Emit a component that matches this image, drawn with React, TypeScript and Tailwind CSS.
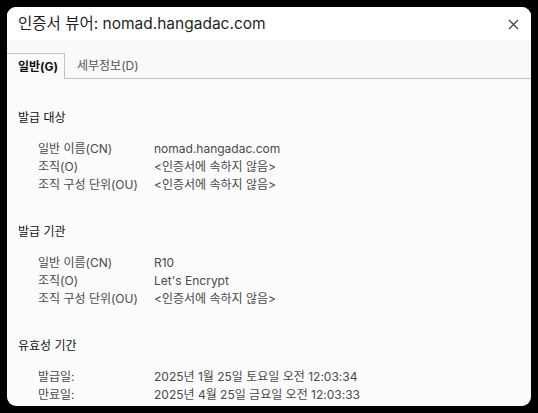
import React from "react";

const sections = [
  {
    title: "발급 대상",
    rows: [
      ["일반 이름(CN)", "nomad.hangadac.com"],
      ["조직(O)", "<인증서에 속하지 않음>"],
      ["조직 구성 단위(OU)", "<인증서에 속하지 않음>"],
    ],
  },
  {
    title: "발급 기관",
    rows: [
      ["일반 이름(CN)", "R10"],
      ["조직(O)", "Let's Encrypt"],
      ["조직 구성 단위(OU)", "<인증서에 속하지 않음>"],
    ],
  },
  {
    title: "유효성 기간",
    rows: [
      ["발급일:", "2025년 1월 25일 토요일 오전 12:03:34"],
      ["만료일:", "2025년 4월 25일 금요일 오전 12:03:33"],
    ],
  },
];

export default function App() {
  return (
    <div
      className="w-[538px] h-[413px] bg-black p-[7px] overflow-hidden"
      style={{ fontFamily: 'Inter, "Noto Sans CJK KR", sans-serif' }}
    >
      <div className="w-[524px] h-[399px] rounded-[9px] bg-[#fbfbfb] overflow-hidden flex flex-col">
        {/* Title bar */}
        <div className="h-[33px] bg-white flex items-center justify-between pl-[11px] pr-[12px] shrink-0">
          <h1 className="text-[15.5px] text-[#1f1f1f]">인증서 뷰어: nomad.hangadac.com</h1>
          <svg width="11" height="11" viewBox="0 0 11 11" className="text-[#444] mt-[2px]">
            <path d="M1 1L10 10M10 1L1 10" stroke="currentColor" strokeWidth="1.3" />
          </svg>
        </div>

        {/* Tabs */}
        <div className="flex items-end h-[39px] shrink-0 bg-[#f9f9f9]">
          <div className="h-[26px] w-[58px] pl-[11px] flex items-center border-t border-r border-[#c4c4c4] bg-[#fbfbfb] text-[12px] font-bold text-[#111]">
            일반(G)
          </div>
          <div className="flex-1 h-[26px] border-b border-[#c4c4c4] flex items-center pl-[12px] text-[12px] text-[#555]">
            세부정보(D)
          </div>
        </div>

        {/* Content */}
        <div className="flex flex-col pl-[11px] pt-[30px]">
          {sections.map((s) => (
            <div key={s.title} className="mb-[29px]">
              <div className="text-[12px] text-[#111] leading-[18px] mb-[13px]">{s.title}</div>
              {s.rows.map(([k, v]) => (
                <div key={k} className="flex text-[12px] leading-[18px] text-[#4a4a4a]">
                  <span className="w-[136px] pl-[20px] shrink-0">{k}</span>
                  <span>{v}</span>
                </div>
              ))}
            </div>
          ))}
        </div>
      </div>
    </div>
  );
}
